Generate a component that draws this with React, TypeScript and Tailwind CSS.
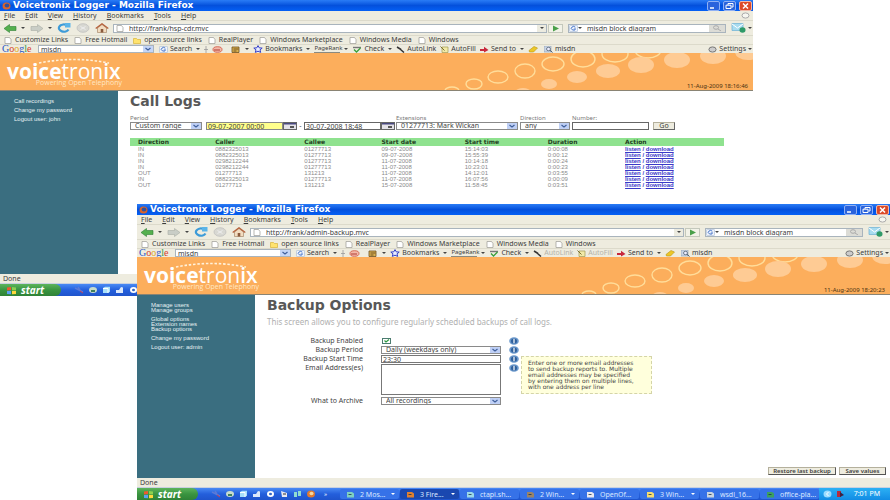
import type { ReactNode } from 'react'
import clsx from 'clsx'

interface CallLog {
  direction: string
  caller: string
  callee: string
  date: string
  time: string
  duration: string
}

const callLogs: CallLog[] = [
  { direction: 'IN', caller: '0882325013', callee: '01277713', date: '09-07-2008', time: '15:14:03', duration: '0:00:08' },
  { direction: 'IN', caller: '0882325013', callee: '01277713', date: '09-07-2008', time: '15:55:39', duration: '0:00:12' },
  { direction: 'IN', caller: '0298212244', callee: '01277713', date: '11-07-2008', time: '10:14:18', duration: '0:00:24' },
  { direction: 'IN', caller: '0298212244', callee: '01277713', date: '11-07-2008', time: '10:23:01', duration: '0:00:23' },
  { direction: 'OUT', caller: '01277713', callee: '131213', date: '11-07-2008', time: '14:12:01', duration: '0:03:55' },
  { direction: 'IN', caller: '0882325013', callee: '01277713', date: '11-07-2008', time: '16:07:56', duration: '0:00:09' },
  { direction: 'OUT', caller: '01277713', callee: '131213', date: '15-07-2008', time: '11:58:45', duration: '0:03:51' },
]

const menuItems = ['File', 'Edit', 'View', 'History', 'Bookmarks', 'Tools', 'Help']

const bookmarks = [
  { label: 'Customize Links' },
  { label: 'Free Hotmail' },
  { label: 'open source links', folder: true },
  { label: 'RealPlayer' },
  { label: 'Windows Marketplace' },
  { label: 'Windows Media' },
  { label: 'Windows' },
]

const tasks = [
  { label: '2 Mos...', color: '#7fd0c0', more: true },
  { label: '3 Fire...', color: '#e08030', more: true, active: true },
  { label: 'ctapi.sh...', color: '#9ad8e8' },
  { label: '2 Win...', color: '#9a8468', more: true },
  { label: 'OpenOf...', color: '#e8e8f0' },
  { label: '3 Win...', color: '#f4dc70', more: true },
  { label: 'wsdl_16...', color: '#c8d4e0' },
  { label: 'office-pla...', color: '#3da060' },
]

const outlined = [
  [452, 38, 7, 4], [474, 31, 8, 5], [498, 24, 10, 6], [525, 18, 10, 7], [553, 11, 11, 7], [583, 6, 12, 8], [615, 1, 13, 8], [648, -3, 13, 8],
]
const filled = [
  [523, 38, 7, 3], [549, 31, 8, 5], [577, 24, 10, 6], [608, 18, 12, 7], [641, 12, 13, 8], [677, 7, 13, 8], [713, 3, 13, 8], [748, -1, 13, 8],
]

function Caret() {
  return (
    <svg className="w-1 h-1 shrink-0" viewBox="0 0 4 4">
      <path d="M0 1h4L2 3z" fill="#444" />
    </svg>
  )
}

function PageIcon({ folder }: { folder?: boolean }) {
  return (
    <svg className="w-2 h-[7px] shrink-0" viewBox="0 0 8 7">
      {folder ? (
        <path d="M.5 1.5h3l1 1h3v4h-7z" fill="#ffe36e" stroke="#d9b43a" strokeWidth=".7" />
      ) : (
        <path d="M1 .5h4.500l1.500 2v4H1z" fill="#fff" stroke="#9a9a94" strokeWidth=".7" />
      )}
    </svg>
  )
}

function ArrowIcon({ forward }: { forward?: boolean }) {
  return (
    <svg className="w-[14px] h-[9px]" viewBox="0 0 14 9">
      {forward ? (
        <path d="M13 4.500 7.500.5v2H1v4h6.500v2z" fill="#c9cdc6" stroke="#a8aca4" strokeWidth=".6" />
      ) : (
        <path d="M1 4.500 6.500.5v2H13v4H6.500v2z" fill="#55b04e" stroke="#2d8036" strokeWidth=".6" />
      )}
    </svg>
  )
}

function ReloadIcon() {
  return (
    <svg className="w-[14px] h-[10px]" viewBox="0 0 14 10">
      <path d="M11.500 6.500A5 3.600 0 1 1 9 1.800" fill="none" stroke="#3d9bd8" strokeWidth="2.200" />
      <path d="M8 0h5.500v4.500H8z" fill="#5ab4e8" />
    </svg>
  )
}

function StopIcon() {
  return (
    <svg className="w-[14px] h-[10px]" viewBox="0 0 14 10">
      <ellipse cx="7" cy="5" rx="6" ry="4.300" fill="#d8d8d2" stroke="#bbb" strokeWidth=".7" />
      <path d="m4.500 3.500 5 3m0-3-5 3" stroke="#eee" />
    </svg>
  )
}

function HomeIcon() {
  return (
    <svg className="w-[14px] h-[10px]" viewBox="0 0 14 10">
      <path d="M2.500 5v4.500h9V5L7 1.500z" fill="#f2dcc0" stroke="#9a7a5a" strokeWidth=".6" />
      <path d="M.7 5.500 7 .8l6.300 4.700" fill="none" stroke="#b5603a" strokeWidth="1.300" />
      <path d="M5.700 6h2.600v3.500H5.700z" fill="#8a5a3c" />
    </svg>
  )
}

function GlobeG() {
  return (
    <svg className="w-[9px] h-[7px] shrink-0" viewBox="0 0 9 7">
      <rect x=".4" y=".4" width="8.200" height="6.200" rx="1" fill="#eef3fb" stroke="#9ab0d0" strokeWidth=".6" />
      <path d="M6.300 2.200A2.200 1.800 0 1 0 6.600 4H4.800" fill="none" stroke="#3568c4" strokeWidth=".9" />
    </svg>
  )
}

function Magnifier() {
  return (
    <svg className="w-[9px] h-[7px] shrink-0" viewBox="0 0 9 7">
      <rect width="7" height="6" fill="#c8d4e4" stroke="#8090a8" strokeWidth=".5" />
      <ellipse cx="4.500" cy="3" rx="2" ry="1.700" fill="#eef" stroke="#456" strokeWidth=".7" />
      <path d="m6 4.300 2.500 2.200" stroke="#456" />
    </svg>
  )
}

function SelectBox({ id, className, value }: { id: string; className: string; value: string }) {
  return (
    <div className={clsx('relative h-2', className)}>
      <select id={id} className="block w-full h-2 pl-1 appearance-none rounded-none border border-[#8a8a8a] bg-white text-[7px] leading-[6px] text-[#444]">
        <option>{value}</option>
      </select>
      <svg className="absolute right-px top-px w-[10px] h-[6px] pointer-events-none" viewBox="0 0 10 6">
        <rect width="10" height="6" fill="#bfd0f6" />
        <path d="m2.500 2 2.500 2L7.500 2" fill="none" stroke="#3f5f9c" strokeWidth="1.200" />
      </svg>
    </div>
  )
}

function TitleBar() {
  return (
    <div className="h-[11px] shrink-0 flex items-center pl-[2px] pr-px bg-linear-to-b from-[#2a7cf6] via-[#0450dc] to-[#0560f5]">
      <svg className="w-[9px] h-[8px] mr-[2px]" viewBox="0 0 9 8">
        <ellipse cx="4.500" cy="4" rx="4" ry="3.500" fill="#d8642c" />
        <ellipse cx="5" cy="3.400" rx="2.300" ry="2" fill="#31509c" />
      </svg>
      <h2 className="text-[9px] leading-[11px] font-bold text-white whitespace-nowrap font-['DejaVu_Sans']">
        Voicetronix Logger - Mozilla Firefox
      </h2>
      <div className="ml-auto flex gap-[3px]">
        <button aria-label="Minimize" className="w-[13px] h-[10px] rounded-xs border border-[#8fb0f4] bg-[#2a63dc]">
          <svg viewBox="0 0 11 8"><path d="M2 6h4" stroke="#fff" strokeWidth="1.500" /></svg>
        </button>
        <button aria-label="Restore" className="w-[13px] h-[10px] rounded-xs border border-[#8fb0f4] bg-[#2a63dc]">
          <svg viewBox="0 0 11 8"><path d="M4 3V1.500h5v3.500H7.500M2 3.200h5v3.300H2z" fill="none" stroke="#fff" /></svg>
        </button>
        <button aria-label="Close" className="w-[13px] h-[10px] rounded-xs border border-[#f0b8a8] bg-[#dc4a28]">
          <svg viewBox="0 0 11 8"><path d="m3 1.500 5 5m0-5-5 5" stroke="#fff" strokeWidth="1.500" /></svg>
        </button>
      </div>
    </div>
  )
}

function MenuBar() {
  return (
    <nav className="h-[10px] shrink-0 flex items-center gap-[10px] pl-1 pr-[3px] border-b border-[#dcdacb]">
      {menuItems.map((item) => (
        <button key={item} className="leading-[9px] first-letter:underline">{item}</button>
      ))}
      <svg className="ml-auto w-[9px] h-[7px]" viewBox="0 0 9 7">
        <ellipse cx="4.500" cy="3.500" rx="3.500" ry="2.600" fill="#f6f6f0" stroke="#aaa" />
      </svg>
    </nav>
  )
}

function NavBar({ id, url }: { id: string; url: string }) {
  return (
    <div className="h-[14px] shrink-0 flex items-center pl-[3px] pr-px">
      <div className="flex items-center gap-[5px]">
        <button aria-label="Back" className="flex items-center gap-1"><ArrowIcon /><Caret /></button>
        <button aria-label="Forward" className="flex items-center gap-1"><ArrowIcon forward /><Caret /></button>
        <button aria-label="Reload"><ReloadIcon /></button>
        <button aria-label="Stop"><StopIcon /></button>
        <button aria-label="Home"><HomeIcon /></button>
      </div>
      <div className="ml-1 h-[9px] flex-1 flex items-center border border-[#a9b4bd] bg-white pl-[2px]">
        <PageIcon />
        <input id={`${id}-url`} aria-label="Address" defaultValue={url} className="ml-[5px] flex-1 min-w-0 h-[7px] leading-[7px] outline-none" />
        <button aria-label="Show history" className="w-[9px] h-[7px] flex items-center justify-center bg-[#ecebe0]"><Caret /></button>
      </div>
      <button aria-label="Go" className="ml-px w-[15px] h-[9px] border border-[#c4c8bc] bg-[#f2f2e8]">
        <svg viewBox="0 0 13 7"><path d="M4 .5v6l6-3z" fill="#4aa04a" /></svg>
      </button>
      <div className="ml-[5px] w-[158px] h-[9px] flex items-center border border-[#a9b4bd] bg-white">
        <GlobeG />
        <Caret />
        <input id={`${id}-search`} aria-label="Search" defaultValue="misdn block diagram" className="ml-[5px] flex-1 min-w-0 h-[7px] leading-[7px] outline-none" />
        <button aria-label="Run search" className="w-4 h-[7px] flex items-center justify-center bg-[#dcdcd6]">
          <svg className="w-[10px] h-[6px]" viewBox="0 0 10 6">
            <ellipse cx="4" cy="2.500" rx="2.500" ry="1.800" fill="none" stroke="#aaa" />
            <path d="m6 4 3 2" stroke="#aaa" />
          </svg>
        </button>
      </div>
      <svg className="ml-[5px] w-[15px] h-[10px]" viewBox="0 0 15 10">
        <path d="M1 .5h11v7H1z" fill="#a8dcf0" stroke="#6cb0d4" strokeWidth=".7" />
        <path d="m1 1 5.500 4L12 1" fill="none" stroke="#fff" />
        <ellipse cx="11.500" cy="7" rx="3" ry="2.800" fill="#2f9a68" />
      </svg>
      <span className="ml-[2px] flex"><Caret /></span>
    </div>
  )
}

function BookmarksBar() {
  return (
    <div className="h-[9px] shrink-0 flex items-center gap-[6px] pl-1 border-t border-[#dcdacb] overflow-hidden">
      {bookmarks.map((b) => (
        <a key={b.label} href="#" className="flex items-center gap-[3px] leading-[8px] whitespace-nowrap">
          <PageIcon folder={b.folder} />
          {b.label}
        </a>
      ))}
    </div>
  )
}

function GoogleBar({ id, dim }: { id: string; dim?: boolean }) {
  return (
    <div className="h-[9px] shrink-0 flex items-center pl-[2px] pr-px whitespace-nowrap border-t border-[#dcdacb]">
      <span className="w-9 text-[10px] leading-[8px] font-['Liberation_Serif']">
        <span className="text-[#2a56c6]">G</span>
        <span className="text-[#d63a2a]">o</span>
        <span className="text-[#e0a820]">o</span>
        <span className="text-[#2a56c6]">g</span>
        <span className="text-[#2f9a48]">l</span>
        <span className="text-[#d63a2a]">e</span>
      </span>
      <div className="w-[116px] h-2 flex items-center border border-[#a9b4bd] bg-white">
        <input id={`${id}-google`} aria-label="Google search" defaultValue="misdn" className="pl-[2px] flex-1 min-w-0 h-[6px] leading-[6px] outline-none" />
        <button aria-label="Recent searches" className="w-[10px] h-[6px] bg-[#c5d6f8]">
          <svg viewBox="0 0 10 6"><path d="m2.500 2 2.500 2L7.500 2" fill="none" stroke="#3f5f9c" strokeWidth="1.200" /></svg>
        </button>
      </div>
      <div className="ml-[5px] flex items-center gap-1 leading-[8px]">
        <button className="flex items-center gap-[2px]"><GlobeG />Search</button>
        <Caret />
        <svg className="w-1 h-[7px]" viewBox="0 0 4 7"><path d="M2 0v7M0 3.500h4" stroke="#999" strokeWidth=".8" /></svg>
        <svg className="w-[11px] h-[7px]" viewBox="0 0 11 7">
          <ellipse cx="5.500" cy="3.500" rx="4.500" ry="2.800" fill="#f2b8a8" stroke="#d0503c" strokeWidth=".8" />
          <path d="M2 4h6" stroke="#b03a30" />
        </svg>
        <svg className="ml-1 w-[10px] h-[7px]" viewBox="0 0 10 7">
          <path d="M1 1h7v5.500H1z" fill="#d8b050" stroke="#6e5020" strokeWidth=".8" />
          <path d="M2.500 3h5M2.500 5h3" stroke="#5a3c18" strokeWidth=".8" />
        </svg>
        <Caret />
        <button className="flex items-center gap-[2px]">
          <svg className="w-[10px] h-2" viewBox="0 0 10 8">
            <path d="m5 .6 1.200 2.200 3 .3-2.200 1.700.7 2.600L5 6.200 2.300 7.400 3 4.800.8 3.100l3-.3z" fill="#e8ecff" stroke="#3640c8" />
          </svg>
          Bookmarks
        </button>
        <Caret />
        <span className="w-[26px] h-[8px] text-[6px] leading-[6px] border-b border-[#8a8a80]">PageRank</span>
        <Caret />
        <button className="flex items-center gap-[2px]">
          <svg className="w-[10px] h-[7px]" viewBox="0 0 10 7">
            <path d="M1 1.500h8" stroke="#777" strokeWidth="1.400" />
            <path d="m2 3.500 2.500 2.500L8.500 2" fill="none" stroke="#38a03c" strokeWidth="1.300" />
          </svg>
          Check
        </button>
        <Caret />
        <button className={clsx('flex items-center gap-[2px]', dim && 'text-[#b4b2a8]')}>
          <svg className="w-[9px] h-[7px]" viewBox="0 0 9 7"><path d="m1 1 4 2.500M4 3l4 3.500" stroke="#333" strokeWidth="1.500" /></svg>
          AutoLink
        </button>
        <button className={clsx('flex items-center gap-[2px]', dim && 'text-[#b4b2a8]')}>
          <svg className="w-[9px] h-[7px]" viewBox="0 0 9 7">
            <path d="M2 1h6v5.500H2z" fill="#f2eaa8" stroke="#a09850" strokeWidth=".7" />
            <path d="m.5.5 4 4" stroke="#7a7030" />
          </svg>
          AutoFill
        </button>
        <button className="flex items-center gap-[2px]">
          <svg className="w-[9px] h-[7px]" viewBox="0 0 9 7">
            <path d="M0 3h4V.8L8.500 4 4 6.500V5H0z" fill="#c8283c" />
          </svg>
          Send to
        </button>
        <Caret />
        <svg className="w-[10px] h-[7px]" viewBox="0 0 10 7"><path d="m1 4.500 5-4 3.500 1.500-4 4H1.500z" fill="#ecc828" stroke="#b89418" strokeWidth=".6" /></svg>
        <span className="ml-[2px] flex items-center gap-[2px]"><Magnifier />misdn</span>
      </div>
      <button className="ml-auto flex items-center gap-[2px] leading-[8px]">
        <svg className="w-[9px] h-[7px]" viewBox="0 0 9 7">
          <ellipse cx="4.500" cy="3.500" rx="3.600" ry="2.600" fill="#ccc" stroke="#777" />
        </svg>
        Settings
        <Caret />
      </button>
    </div>
  )
}

function Banner({ stamp }: { stamp: string }) {
  return (
    <header className="relative h-[38px] shrink-0 overflow-hidden bg-[#fcae5c] border-b border-[#8a8474]">
      <svg className="absolute right-0 top-0 w-[313px] h-[38px]" viewBox="440 0 313 38">
        {outlined.map(([cx, cy, rx, ry]) => (
          <ellipse key={cx} cx={cx} cy={cy} rx={rx} ry={ry} fill="none" stroke="#ffdd9a" strokeWidth="1.400" />
        ))}
        {filled.map(([cx, cy, rx, ry]) => (
          <ellipse key={cx} cx={cx} cy={cy} rx={rx} ry={ry} fill="#fecb94" />
        ))}
      </svg>
      <div className="w-[122px] pl-[7px] pt-[5px] font-['Open_Sans'] text-white">
        <svg className="ml-[29px] block w-[76px] h-[6px]" viewBox="0 0 76 6">
          <path d="M3 5Q38-2 73 5" fill="none" stroke="#fff2dc" strokeWidth="1.600" strokeDasharray="2.500 1.800" />
        </svg>
        <p className="text-[21px] leading-[14px] whitespace-nowrap">
          <span className="font-bold">voice</span>tron<span className="font-semibold">ix</span>
        </p>
        <p className="mt-px text-[7px] leading-[8px] text-right text-[#ffe6c4] whitespace-nowrap">Powering Open Telephony</p>
      </div>
      <time className="absolute right-[5px] bottom-px text-[6px] leading-[6px] text-[#4a3010]">{stamp}</time>
    </header>
  )
}

function Sidebar({ groups }: { groups: string[][] }) {
  return (
    <aside className="w-[118px] shrink-0 pl-[14px] pt-2 flex flex-col gap-1 bg-[#3a6e80] text-[6px] leading-[5px] text-[#e6f0f2] font-['Liberation_Sans']">
      {groups.map((group) => (
        <ul key={group[0]}>
          {group.map((item) => (
            <li key={item}><a href="#" className="block">{item}</a></li>
          ))}
        </ul>
      ))}
    </aside>
  )
}

function QuickLaunch() {
  return (
    <div className="flex items-center gap-1 pl-[13px]">
      <svg className="w-[10px] h-2" viewBox="0 0 10 8"><path d="m1 2 4 2 4 2M4 1l2 3" stroke="#5a7ad8" strokeWidth="1.400" /><path d="m6 5 3 2" stroke="#c83c50" /></svg>
      <svg className="w-[10px] h-2" viewBox="0 0 10 8"><ellipse cx="5" cy="4" rx="4" ry="3" fill="#c8dccc" /><path d="M3 4h4v2H3z" fill="#3f8060" /></svg>
      <svg className="w-[9px] h-2" viewBox="0 0 9 8"><path d="M1 2 3 .8h5v5L6 7H1z" fill="#a8e0fa" /><path d="M1 2.500h5V7" fill="none" stroke="#fff" /></svg>
      <svg className="w-[10px] h-2" viewBox="0 0 10 8"><path d="M1 4h3l2-3 2 .5V7H1z" fill="#dce8fa" /></svg>
      <svg className="w-[9px] h-2" viewBox="0 0 9 8"><ellipse cx="4.500" cy="4" rx="3.500" ry="3" fill="#fff" /><ellipse cx="4.500" cy="4" rx="1.500" ry="1.300" fill="#3568c4" /></svg>
      <svg className="w-[10px] h-2" viewBox="0 0 10 8"><path d="m2 1 6 2v4H3z" fill="#e8e8f0" /><path d="M4 4h3" stroke="#333" /></svg>
      <svg className="w-[9px] h-2" viewBox="0 0 9 8"><path d="M1 2h3v5H1zM5 1h3v5H5z" fill="#90dcd0" /></svg>
      <svg className="w-[10px] h-2" viewBox="0 0 10 8"><ellipse cx="5" cy="4" rx="4" ry="3.500" fill="#e07a30" /><ellipse cx="5.500" cy="3.500" rx="2" ry="1.800" fill="#f4d8a0" /></svg>
    </div>
  )
}

function TaskBar({ children }: { children?: ReactNode }) {
  return (
    <footer className="h-3 shrink-0 flex items-center bg-linear-to-b from-[#4a8af4] via-[#245fdc] to-[#1f54cc]">
      <button className="w-[61px] h-3 flex items-center gap-1 pl-[6px] rounded-r-md bg-linear-to-b from-[#5cb45c] via-[#3a9440] to-[#2f8236] text-[10px] leading-[11px] italic font-bold text-white">
        <svg className="w-[11px] h-[9px]" viewBox="0 0 11 9">
          <path d="M1 1.500 5 1v3L1 4.500z" fill="#ee5a30" />
          <path d="m6 1 4 .5v3L6 4z" fill="#8cd050" />
          <path d="m1 5 4-.3v3.500L1 8z" fill="#5aa0f4" />
          <path d="m6 4.700 4 .3v3l-4 .2z" fill="#ffd83c" />
        </svg>
        start
      </button>
      <QuickLaunch />
      {children}
    </footer>
  )
}

interface WindowProps {
  id: string
  url: string
  stamp: string
  dim?: boolean
  groups: string[][]
  taskbar?: ReactNode
  className: string
  children: ReactNode
}

function BrowserWindow({ id, url, stamp, dim, groups, taskbar, className, children }: WindowProps) {
  return (
    <section className={clsx('absolute flex flex-col overflow-hidden bg-[#eeecdf] text-[7px] text-[#3c3c3c]', className)}>
      <TitleBar />
      <MenuBar />
      <NavBar id={id} url={url} />
      <BookmarksBar />
      <GoogleBar id={id} dim={dim} />
      <Banner stamp={stamp} />
      <div className="flex-1 min-h-0 flex bg-white">
        <Sidebar groups={groups} />
        <main className="flex-1 min-w-0 flex flex-col pl-3 pt-[2px]">{children}</main>
      </div>
      <div className="h-[10px] shrink-0 pl-[3px] leading-[9px] border-b border-[#c8d0e0]">Done</div>
      <TaskBar>{taskbar}</TaskBar>
    </section>
  )
}

function CalendarButton() {
  return (
    <button type="button" aria-label="Pick a date" className="w-[14px] h-2 border border-[#666] bg-[#e4e2e8]">
      <svg className="block w-3 h-[6px]" viewBox="0 0 12 6">
        <path d="M0 0h12v1.500H0z" fill="#4a4a80" />
        <path d="M6 3h4v2H6z" fill="#555" />
      </svg>
    </button>
  )
}

function CallLogs() {
  return (
    <>
      <h1 className="text-sm leading-4 font-bold text-[#585858] font-['DejaVu_Sans']">Call Logs</h1>
      <form className="mt-[6px] flex items-end">
        <div>
          <label htmlFor="period" className="block text-[6px] leading-[6px] mb-px text-[#777]">Period</label>
          <div className="flex items-center">
            <SelectBox id="period" className="w-[72px] mr-1" value="Custom range" />
            <input aria-label="From" defaultValue="09-07-2007 00:00" className="w-[77px] h-2 leading-[6px] border border-[#888] bg-[#ffff8c] px-px" />
            <CalendarButton />
            <span className="w-[7px] leading-[8px] text-center">-</span>
            <input aria-label="To" defaultValue="30-07-2008 18:48" className="w-[77px] h-2 leading-[6px] border border-[#666] bg-white px-px" />
            <CalendarButton />
          </div>
        </div>
        <div className="ml-px">
          <label htmlFor="extensions" className="block text-[6px] leading-[6px] mb-px text-[#777]">Extensions</label>
          <SelectBox id="extensions" className="w-[122px]" value="01277713: Mark Wickan" />
        </div>
        <div className="ml-[2px]">
          <label htmlFor="direction" className="block text-[6px] leading-[6px] mb-px text-[#777]">Direction</label>
          <SelectBox id="direction" className="w-[50px]" value="any" />
        </div>
        <div className="ml-[2px]">
          <label htmlFor="number" className="block text-[6px] leading-[6px] mb-px text-[#777]">Number:</label>
          <input id="number" className="block w-[77px] h-2 border border-[#666] bg-white" />
        </div>
        <button type="button" className="ml-1 w-[22px] h-2 leading-[6px] border border-[#b4b09c] border-b-[#666] border-r-[#666] bg-[#eeecdf]">Go</button>
      </form>
      <div className="mt-2 pr-[29px]">
        <table className="w-full table-fixed text-left text-[6px] leading-[6px] text-[#8a8a8a] font-['Liberation_Sans']">
          <thead>
            <tr className="h-2 bg-[#8fe28f] text-[#1f3f1f] font-['DejaVu_Sans']">
              <th className="w-[13%] p-0 pl-2">Direction</th>
              <th className="w-[15%] p-0 pl-2">Caller</th>
              <th className="w-[13%] p-0 pl-2">Callee</th>
              <th className="w-[14%] p-0 pl-2">Start date</th>
              <th className="w-[14%] p-0 pl-2">Start time</th>
              <th className="w-[13%] p-0 pl-2">Duration</th>
              <th className="w-[18%] p-0 pl-2">Action</th>
            </tr>
          </thead>
          <tbody>
            {callLogs.map((log) => (
              <tr key={log.date + log.time} className="h-[6px]">
                <td className="p-0 pl-2">{log.direction}</td>
                <td className="p-0 pl-2">{log.caller}</td>
                <td className="p-0 pl-2">{log.callee}</td>
                <td className="p-0 pl-2">{log.date}</td>
                <td className="p-0 pl-2">{log.time}</td>
                <td className="p-0 pl-2">{log.duration}</td>
                <td className="p-0 pl-2 font-bold text-[#3a3ac8]">
                  <a href="#" className="underline">listen</a> / <a href="#" className="underline">download</a>
                </td>
              </tr>
            ))}
          </tbody>
        </table>
      </div>
    </>
  )
}

function HelpIcon() {
  return (
    <button type="button" aria-label="Help" className="ml-2 self-start">
      <svg className="w-[10px] h-2" viewBox="0 0 10 8">
        <ellipse cx="5" cy="4" rx="4.800" ry="3.800" fill="#6a98cc" />
        <ellipse cx="5" cy="4" rx="3" ry="2.600" fill="#2f609c" />
        <path d="M5 1.800v4.400" stroke="#fff" strokeWidth="1.200" />
      </svg>
    </button>
  )
}

function FormRow({ id, label, children }: { id: string; label: string; children: ReactNode }) {
  return (
    <div className="flex">
      <label htmlFor={id} className="w-24 mr-[18px] text-right leading-[8px] text-[#444]">{label}</label>
      {children}
    </div>
  )
}

function BackupOptions() {
  return (
    <>
      <h1 className="text-sm leading-4 font-bold text-[#585858] font-['DejaVu_Sans']">Backup Options</h1>
      <p className="mt-[5px] text-[8px] leading-[8px] text-[#b0b0b0]">
        This screen allows you to configure regularly scheduled backups of call logs.
      </p>
      <form className="flex-1 mt-[11px] flex flex-col gap-px">
        <FormRow id="enabled" label="Backup Enabled">
          <div className="relative w-[120px] pl-px pt-px">
            <input id="enabled" type="checkbox" defaultChecked className="peer block appearance-none w-[9px] h-[6px] border border-[#4c7c70] bg-white" />
            <svg className="absolute left-px top-px w-[9px] h-[6px] pointer-events-none hidden peer-checked:block" viewBox="0 0 9 6">
              <path d="m2.500 2.500 1.500 1.500L7 1.500" fill="none" stroke="#2c9a40" strokeWidth="1.200" />
            </svg>
          </div>
          <HelpIcon />
        </FormRow>
        <FormRow id="backup-period" label="Backup Period">
          <SelectBox id="backup-period" className="w-[120px]" value="Daily (weekdays only)" />
          <HelpIcon />
        </FormRow>
        <FormRow id="start-time" label="Backup Start Time">
          <input id="start-time" defaultValue="23:30" className="w-[120px] h-2 px-px leading-[6px] border border-[#777] bg-white" />
          <HelpIcon />
        </FormRow>
        <FormRow id="emails" label="Email Address(es)">
          <textarea id="emails" className="block w-[120px] h-[31px] resize-none border border-[#777] bg-white" />
          <div className="relative">
            <HelpIcon />
            <p role="tooltip" className="absolute left-5 -top-2 w-[131px] px-[6px] py-[3px] border border-dashed border-[#d4d4a8] bg-[#ffffdc] text-[6px] leading-[6px] text-[#444] whitespace-nowrap font-['DejaVu_Sans']">
              Enter one or more email addresses<br />
              to send backup reports to. Multiple<br />
              email addresses may be specified<br />
              by entering them on multiple lines,<br />
              with one address per line
            </p>
          </div>
        </FormRow>
        <div className="mt-px">
          <FormRow id="archive" label="What to Archive">
            <SelectBox id="archive" className="w-[120px]" value="All recordings" />
          </FormRow>
        </div>
        <div className="mt-auto pb-[3px] pr-1 flex justify-end gap-[3px] text-[6px] leading-[6px] font-semibold">
          <button type="button" className="w-[68px] h-2 border border-[#b4b09c] border-b-[#555] border-r-[#555] bg-[#eeecdf]">Restore last backup</button>
          <button type="button" className="w-[47px] h-2 border border-[#b4b09c] border-b-[#555] border-r-[#555] bg-[#eeecdf]">Save values</button>
        </div>
      </form>
    </>
  )
}

function RunningTasks() {
  return (
    <>
      <span className="w-6 shrink-0 pl-2 text-[6px] leading-[8px] text-white">»</span>
      <div className="flex-1 min-w-0 flex gap-px">
        {tasks.map((task) => (
          <button
            key={task.label}
            className={clsx(
              'flex-1 min-w-0 h-[10px] flex items-center gap-[5px] pl-[6px] pr-1 rounded-xs text-[7px] leading-[9px] text-[#dce8ff] whitespace-nowrap',
              task.active ? 'bg-[#1a48b0]' : 'bg-[#3672e8]',
            )}
          >
            <svg className="w-[9px] h-[7px] shrink-0" viewBox="0 0 9 7">
              <path d="M1 1h5l2 1.500v4H1z" fill={task.color} />
              <path d="M2.500 3.500h3" stroke="#234" strokeWidth=".8" />
            </svg>
            {task.label}
            {task.more && (
              <svg className="ml-auto w-1 h-1" viewBox="0 0 4 4"><path d="M0 1h4L2 3z" fill="#fff" /></svg>
            )}
          </button>
        ))}
      </div>
      <div className="w-[71px] h-3 shrink-0 flex items-center gap-1 pl-1 bg-linear-to-b from-[#2cb0f4] to-[#128ce4] text-[7px] leading-[10px] text-white">
        <svg className="w-[9px] h-2" viewBox="0 0 9 8">
          <ellipse cx="4.500" cy="4" rx="4" ry="3.500" fill="#9adcff" />
          <path d="M5.500 2 3.500 4l2 2" fill="none" stroke="#fff" />
        </svg>
        <svg className="w-[9px] h-2" viewBox="0 0 9 8"><path d="M1 1h4v6H1z" fill="#b82c3c" /><path d="m4 2 4 3-4 2z" fill="#402040" /></svg>
        <span className="ml-auto pr-[10px]">7:01 PM</span>
      </div>
    </>
  )
}

export default function App() {
  return (
    <div className="relative h-screen overflow-hidden bg-white font-['Noto_Sans',sans-serif]">
      <BrowserWindow
        id="logs"
        url="http://frank/hsp-cdr.mvc"
        stamp="11-Aug-2009 18:16:46"
        groups={[['Call recordings'], ['Change my password'], ['Logout user: john']]}
        className="left-0 top-0 right-[137px] bottom-[204px]"
      >
        <CallLogs />
      </BrowserWindow>
      <BrowserWindow
        id="backup"
        url="http://frank/admin-backup.mvc"
        stamp="11-Aug-2009 18:20:23"
        dim
        groups={[
          ['Manage users', 'Manage groups'],
          ['Global options', 'Extension names', 'Backup options'],
          ['Change my password'],
          ['Logout user: admin'],
        ]}
        taskbar={<RunningTasks />}
        className="left-[137px] top-[204px] right-0 bottom-0"
      >
        <BackupOptions />
      </BrowserWindow>
    </div>
  )
}
